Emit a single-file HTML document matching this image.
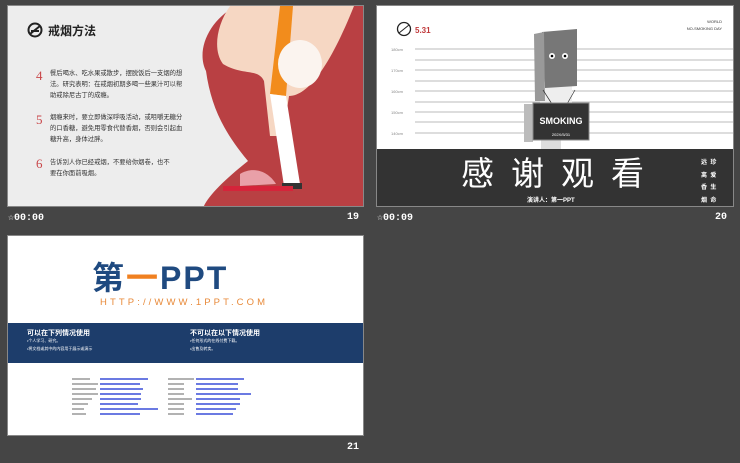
<!DOCTYPE html>
<html><head><meta charset="utf-8"><style>
*{margin:0;padding:0;box-sizing:border-box}
body{width:740px;height:463px;background:#454545;position:relative;overflow:hidden;font-family:"Liberation Sans","Noto Sans CJK SC",sans-serif}
.s{position:absolute;overflow:hidden;border:1px solid #888}
.lab{position:absolute;color:#fff;font-size:10px;font-weight:bold;font-family:"Liberation Mono",monospace}
.t{position:absolute;font-size:6.3px;color:#333;line-height:11px;width:137px}
.n{position:absolute;color:#c9474a;font-size:13px;font-family:"Liberation Serif",serif}
</style></head><body>

<!-- slide 19 -->
<div class="s" style="left:7px;top:5px;width:357px;height:202px;background:#ededed">
<svg width="357" height="202" style="position:absolute;left:0;top:0">
<path d="M228 0 C200 15 188 45 198 65 C203 100 215 125 240 155 C215 175 200 190 195 202 L357 202 L357 0 Z" fill="#b94043"/>
<path d="M232 168 C245 160 260 165 268 178 L232 180Z" fill="#e9a0a8"/>
<path d="M222 0 C208 20 205 45 215 58 C235 70 250 62 256 75 L262 130 L275 130 L281 90 C300 90 322 60 346 0 Z" fill="#f6d7c3"/>
<path d="M272 0 L285 0 L278 90 L262 88Z" fill="#f28c1c"/>
<ellipse cx="292" cy="58" rx="22" ry="24" fill="#fbf4ef"/>
<path d="M262 88 L278 90 L292 178 L276 180Z" fill="#fff"/>
<rect x="274" y="177" width="20" height="6" fill="#333"/>
<rect x="215" y="180" width="70" height="5" fill="#d5243a"/>
</svg>
<svg width="16" height="16" style="position:absolute;left:19px;top:16px" viewBox="0 0 16 16"><circle cx="8" cy="8" r="6.5" fill="none" stroke="#222" stroke-width="2"/><path d="M3 12L13 4" stroke="#222" stroke-width="2"/><rect x="4" y="8" width="8" height="2" fill="#222"/></svg>
<div style="position:absolute;left:40px;top:16px;font-size:12px;font-weight:bold;color:#222">戒烟方法</div>
<div class="n" style="left:28px;top:62px">4</div>
<div class="t" style="left:42px;top:62px">餐后喝水、吃水果或散步，摆脱饭后一支烟的想法。研究表明：在戒烟初期多喝一些果汁可以帮助戒除尼古丁的成瘾。</div>
<div class="n" style="left:28px;top:106px">5</div>
<div class="t" style="left:42px;top:106px">烟瘾来时，要立即做深呼吸活动，或咀嚼无糖分的口香糖，避免用零食代替香烟，否则会引起血糖升高，身体过胖。</div>
<div class="n" style="left:28px;top:150px">6</div>
<div class="t" style="left:42px;top:151px;width:122px">告诉别人你已经戒烟，不要给你烟卷，也不要在你面前吸烟。</div>
</div>
<div class="lab" style="left:8px;top:212px">☆00:00</div>
<div class="lab" style="left:347px;top:212px">19</div>

<!-- slide 20 -->
<div class="s" style="left:376px;top:5px;width:358px;height:202px;background:#fff">
<svg width="358" height="202" style="position:absolute;left:0;top:0">
<g stroke="#bbb" stroke-width="1"><line x1="38" y1="43" x2="358" y2="43"/><line x1="38" y1="54" x2="358" y2="54"/><line x1="38" y1="64" x2="358" y2="64"/><line x1="38" y1="75" x2="358" y2="75"/><line x1="38" y1="85" x2="358" y2="85"/><line x1="38" y1="96" x2="358" y2="96"/><line x1="38" y1="106" x2="358" y2="106"/><line x1="38" y1="116" x2="358" y2="116"/><line x1="38" y1="127" x2="358" y2="127"/></g>
<g font-size="4" fill="#888"><text x="14" y="45">180cm</text><text x="14" y="66">170cm</text><text x="14" y="87">160cm</text><text x="14" y="108">150cm</text><text x="14" y="129">140cm</text></g>
<rect x="147" y="98" width="9" height="38" fill="#bbb"/>
<rect x="164" y="132" width="20" height="12" fill="#ddd"/>
<rect x="163" y="78" width="32" height="20" fill="#eee"/>
<path d="M165 26 L200 23 L200 80 L168 82Z" fill="#777"/>
<path d="M157 28 L167 26 L168 95 L158 95Z" fill="#999"/>
<circle cx="175" cy="50" r="3" fill="#fff"/><circle cx="188" cy="50" r="3" fill="#fff"/><circle cx="175" cy="50" r="1.3" fill="#000"/><circle cx="188" cy="50" r="1.3" fill="#000"/>
<path d="M166 84 L175 98 M198 84 L190 98" stroke="#333" stroke-width="0.7" fill="none"/>
<rect x="156" y="97" width="56" height="37" fill="#333" stroke="#888"/>
<text x="184" y="118" text-anchor="middle" font-size="9" font-weight="bold" fill="#fff">SMOKING</text>
<text x="184" y="130" text-anchor="middle" font-size="4" fill="#fff">202X/5/31</text>
<circle cx="27" cy="23" r="6.5" fill="none" stroke="#222" stroke-width="1.3"/><path d="M22 27L32 19" stroke="#222"/>
<text x="38" y="27" font-size="8" font-weight="bold" fill="#c0393b">5.31</text>
<text x="345" y="17" text-anchor="end" font-size="4" fill="#333">WORLD</text>
<text x="345" y="24" text-anchor="end" font-size="4" fill="#333">NO-SMOKING DAY</text>
</svg>
<div style="position:absolute;left:0;top:143px;width:358px;height:59px;background:#333"></div>
<div style="position:absolute;left:84px;top:148px;font-size:33px;color:#fff;letter-spacing:17px;line-height:40px;white-space:nowrap">感谢观看</div>
<div style="position:absolute;left:150px;top:189px;font-size:6px;color:#fff;font-weight:bold">演讲人：第一PPT</div>
<div style="position:absolute;left:324px;top:151px;font-size:6px;color:#fff;line-height:12.7px;white-space:nowrap;font-weight:bold">远&nbsp;&nbsp;珍<br>离&nbsp;&nbsp;爱<br>香&nbsp;&nbsp;生<br>烟&nbsp;&nbsp;命</div>
</div>
<div class="lab" style="left:377px;top:212px">☆00:09</div>
<div class="lab" style="left:715px;top:212px">20</div>

<!-- slide 21 -->
<div class="s" style="left:7px;top:235px;width:357px;height:201px;background:#fff">
<div style="position:absolute;left:84px;top:24px;font-size:32px;font-weight:bold;color:#1f4a80;letter-spacing:2px;line-height:36px">第<span style="color:#f08020">一</span>PPT</div>
<div style="position:absolute;left:92px;top:61px;font-size:9.5px;color:#e88a3a;letter-spacing:3.1px;white-space:nowrap">HTTP://WWW.1PPT.COM</div>
<div style="position:absolute;left:0;top:87px;width:357px;height:40px;background:#1d3d6b;color:#fff">
<div style="position:absolute;left:19px;top:5px;font-size:7px;font-weight:bold">可以在下列情况使用</div>
<div style="position:absolute;left:19px;top:15px;font-size:4px">•个人学习、研究。</div>
<div style="position:absolute;left:19px;top:23px;font-size:4px">•将文档或其中的内容用于展示或演示</div>
<div style="position:absolute;left:182px;top:5px;font-size:7px;font-weight:bold">不可以在以下情况使用</div>
<div style="position:absolute;left:182px;top:15px;font-size:4px">•任何形式的在线付费下载。</div>
<div style="position:absolute;left:182px;top:23px;font-size:4px">•出售及转卖。</div>
</div>
<svg width="357" height="201" style="position:absolute;left:0;top:0">
<g stroke="#3a4fd8" stroke-width="1.5">
<line x1="92" y1="143" x2="140" y2="143"/><line x1="92" y1="148" x2="132" y2="148"/><line x1="92" y1="153" x2="135" y2="153"/><line x1="92" y1="158" x2="133" y2="158"/><line x1="92" y1="163" x2="133" y2="163"/><line x1="92" y1="168" x2="130" y2="168"/><line x1="92" y1="173" x2="150" y2="173"/><line x1="92" y1="178" x2="132" y2="178"/>
<line x1="188" y1="143" x2="236" y2="143"/><line x1="188" y1="148" x2="230" y2="148"/><line x1="188" y1="153" x2="230" y2="153"/><line x1="188" y1="158" x2="243" y2="158"/><line x1="188" y1="163" x2="232" y2="163"/><line x1="188" y1="168" x2="232" y2="168"/><line x1="188" y1="173" x2="228" y2="173"/><line x1="188" y1="178" x2="225" y2="178"/>
</g>
<g stroke="#999" stroke-width="1.5">
<line x1="64" y1="143" x2="82" y2="143"/><line x1="64" y1="148" x2="90" y2="148"/><line x1="64" y1="153" x2="88" y2="153"/><line x1="64" y1="158" x2="90" y2="158"/><line x1="64" y1="163" x2="84" y2="163"/><line x1="64" y1="168" x2="80" y2="168"/><line x1="64" y1="173" x2="76" y2="173"/><line x1="64" y1="178" x2="78" y2="178"/>
<line x1="160" y1="143" x2="186" y2="143"/><line x1="160" y1="148" x2="176" y2="148"/><line x1="160" y1="153" x2="176" y2="153"/><line x1="160" y1="158" x2="176" y2="158"/><line x1="160" y1="163" x2="184" y2="163"/><line x1="160" y1="168" x2="176" y2="168"/><line x1="160" y1="173" x2="176" y2="173"/><line x1="160" y1="178" x2="176" y2="178"/>
</g>
</svg>
</div>
<div class="lab" style="left:347px;top:442px">21</div>
</body></html>
